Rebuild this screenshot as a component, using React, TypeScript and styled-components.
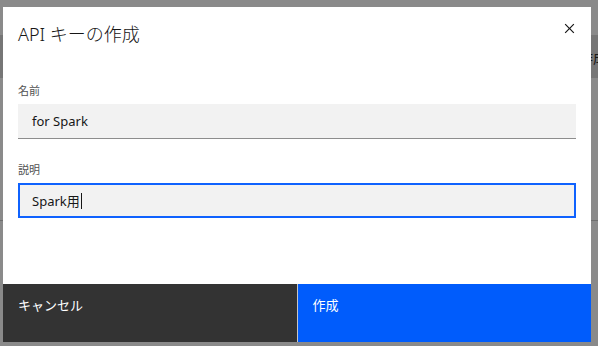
import React from 'react';
import styled, { createGlobalStyle } from 'styled-components';

const Global = createGlobalStyle`
  html, body { margin: 0; padding: 0; }
  body {
    width: 598px;
    height: 346px;
    overflow: hidden;
    background: #ffffff;
    font-family: "Noto Sans", "Noto Sans CJK JP", sans-serif;
  }
`;

const Page = styled.div`
  position: relative;
  width: 598px;
  height: 346px;
  overflow: hidden;
  background: #ffffff;
  display: flex;
  flex-direction: column;
`;

const Toolbar = styled.div`
  margin-top: 35px;
  height: 43px;
  background: #d6d6d6;
  display: flex;
  justify-content: flex-end;
  align-items: center;
  overflow: hidden;
`;

const ToolbarButton = styled.div`
  margin-right: -9px;
  font-size: 14px;
  color: #161616;
`;

const PageDivider = styled.div`
  margin-top: 142px;
  height: 1px;
  background: #c6c6c6;
`;

const Overlay = styled.div`
  position: absolute;
  inset: 0;
  background: rgba(22, 22, 22, 0.5);
  display: flex;
  padding: 7px 7px 4px 3px;
`;

const Modal = styled.div`
  position: relative;
  flex: 1;
  background: #ffffff;
  display: flex;
  flex-direction: column;
`;

const Header = styled.div`
  padding: 13px 15px 0 15px;
`;

const Title = styled.h2`
  margin: 0;
  font-size: 18px;
  line-height: 28px;
  font-weight: 300;
  color: #161616;
`;

const CloseButton = styled.button`
  position: absolute;
  top: 0;
  right: 0;
  width: 44px;
  height: 42px;
  border: 0;
  padding: 0;
  background: transparent;
  display: flex;
  align-items: center;
  justify-content: center;
  color: #161616;
`;

const Body = styled.div`
  flex: 1;
  padding: 35px 15px 0 15px;
  display: flex;
  flex-direction: column;
  gap: 23px;
`;

const FieldGroup = styled.div`
  display: flex;
  flex-direction: column;
  gap: 5px;
`;

const Label = styled.label`
  font-size: 11px;
  line-height: 16px;
  color: #525252;
`;

const Field = styled.div<{ $focused?: boolean }>`
  height: 35px;
  box-sizing: border-box;
  background: #f2f2f2;
  border-bottom: ${p => (p.$focused ? '0' : '1px solid #8d8d8d')};
  box-shadow: ${p => (p.$focused ? 'inset 0 0 0 2px #0f62fe' : 'none')};
  padding: 0 14px;
  display: flex;
  align-items: center;
  font-size: 13px;
  color: #161616;
`;

const Caret = styled.span`
  display: inline-block;
  width: 1px;
  height: 16px;
  background: #161616;
  margin-left: 1px;
`;

const Footer = styled.div`
  height: 58px;
  display: flex;
  gap: 1px;
  background: #c6c6c6;
`;

const FooterButton = styled.button<{ $primary?: boolean }>`
  flex: 1;
  border: 0;
  margin: 0;
  padding: 12px 15px 0 15px;
  text-align: left;
  display: flex;
  align-items: flex-start;
  font-family: inherit;
  font-size: 13px;
  line-height: 18px;
  color: #ffffff;
  background: ${p => (p.$primary ? '#005cfc' : '#333333')};
`;

const CloseIcon = () => (
  <svg width="19" height="19" viewBox="0 0 16 16" fill="currentColor" aria-hidden>
    <path d="M12 4.7L11.3 4 8 7.3 4.7 4 4 4.7 7.3 8 4 11.3 4.7 12 8 8.7 11.3 12 12 11.3 8.7 8z" />
  </svg>
);

export default function App() {
  return (
    <>
      <Global />
      <Page>
        <Toolbar>
          <ToolbarButton>作成</ToolbarButton>
        </Toolbar>
        <PageDivider />
        <Overlay>
          <Modal role="dialog">
            <Header>
              <Title>API キーの作成</Title>
            </Header>
            <CloseButton aria-label="閉じる">
              <CloseIcon />
            </CloseButton>
            <Body>
              <FieldGroup>
                <Label>名前</Label>
                <Field>for Spark</Field>
              </FieldGroup>
              <FieldGroup>
                <Label>説明</Label>
                <Field $focused>
                  Spark用
                  <Caret />
                </Field>
              </FieldGroup>
            </Body>
            <Footer>
              <FooterButton>キャンセル</FooterButton>
              <FooterButton $primary>作成</FooterButton>
            </Footer>
          </Modal>
        </Overlay>
      </Page>
    </>
  );
}
